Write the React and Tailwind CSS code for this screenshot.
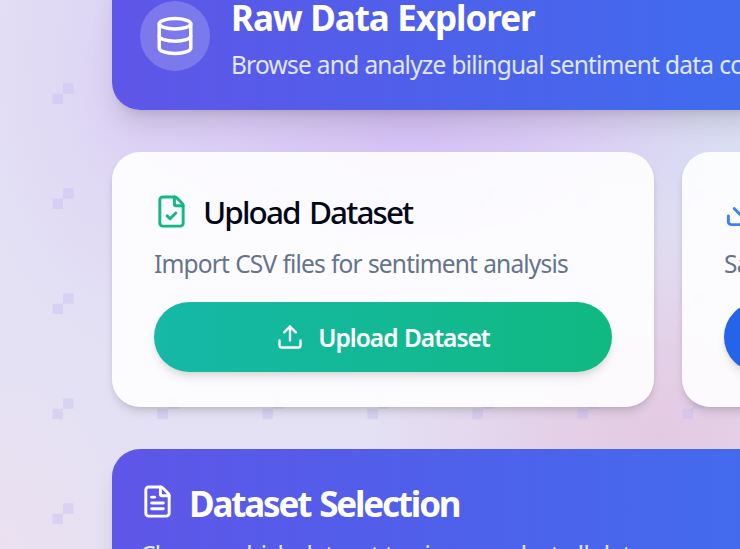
import { Database, FileCheck, FileText, Upload, Download } from "lucide-react";

function Backdrop() {
  return (
    <div className="absolute inset-0 bg-[#e4e1f4] bg-[radial-gradient(ellipse_340px_220px_at_410px_100px,#d3bdf4_0%,#d3bdf4b0_40%,transparent_100%),radial-gradient(ellipse_290px_230px_at_660px_435px,#e3cae3_0%,#e3cae3b0_40%,transparent_100%),radial-gradient(ellipse_220px_260px_at_770px_130px,#d7dff2_0%,transparent_100%),radial-gradient(ellipse_150px_200px_at_0px_549px,#eae0f0_0%,transparent_100%),radial-gradient(ellipse_170px_300px_at_130px_60px,#dcd3f5_0%,transparent_100%)]">
      <svg className="h-full w-full" aria-hidden="true">
        <defs>
          <pattern id="tiles" width="105" height="105" patternUnits="userSpaceOnUse" y="-1">
            <path d="M52.4 94.8h10.6v10.2H52.4zM63 84.2h10.6v10.6H63z" fill="#c5bbf3" fillOpacity="0.4" />
          </pattern>
        </defs>
        <rect width="100%" height="100%" fill="url(#tiles)" />
      </svg>
    </div>
  );
}

export default function App() {
  return (
    <div className="relative h-[549px] w-full overflow-hidden font-['Noto_Sans','Open_Sans',sans-serif]">
      <Backdrop />
      <main className="relative -mt-[41px] ml-[112px] flex w-[1112px] flex-col gap-[42px]">
        <header className="flex h-[151px] items-start gap-[21px] rounded-[28px] bg-[linear-gradient(90deg,#5f56e8_0px,#535de9_230px,#406bee_628px)] px-7 pt-[42px] shadow-[0_17px_26px_-5px_rgba(0,0,0,0.12),0_7px_11px_-7px_rgba(0,0,0,0.14)]">
          <div className="flex size-[70px] shrink-0 items-center justify-center rounded-full bg-white/20">
            <Database size={42} className="text-white" />
          </div>
          <div className="whitespace-nowrap">
            <h1 className="-mt-[8px] text-[35px] leading-[49px] font-bold tracking-[-1.06px] [word-spacing:0.5px] text-white">Raw Data Explorer</h1>
            <p className="mt-[5px] text-[24.5px] leading-[35px] tracking-[-0.8px] [word-spacing:0.4px] text-indigo-100">Browse and analyze bilingual sentiment data collection</p>
          </div>
        </header>

        <section className="grid grid-cols-2 gap-7">
          <article className="h-[255px] rounded-[28px] bg-white/90 px-[42px] pt-[42px] shadow-[0_7px_11px_-2px_rgba(0,0,0,0.1),0_3px_7px_-3px_rgba(0,0,0,0.15)]">
            <div className="flex h-[35px] items-center gap-[14px]">
              <FileCheck size={35} className="shrink-0 text-[#10b981]" />
              <h2 className="text-[31.5px] leading-[35px] font-medium tracking-[-1.9px] [word-spacing:3px] whitespace-nowrap text-[#020817]">Upload Dataset</h2>
            </div>
            <p className="mt-[17px] text-[24.5px] leading-[35px] tracking-[-0.82px] [word-spacing:0.5px] whitespace-nowrap text-[#64748b]">Import CSV files for sentiment analysis</p>
            <button className="mt-[21px] flex h-[70px] w-full items-center justify-center gap-[14px] rounded-full bg-linear-to-r from-[#16b8a7] to-[#10b981] text-[24.5px] font-semibold tracking-[-1px] [word-spacing:1px] whitespace-nowrap text-white shadow-[0_7px_11px_-2px_rgba(0,0,0,0.1),0_3px_7px_-3px_rgba(0,0,0,0.12)]">
              <Upload size={28} />
              <span className="mt-[2px]">Upload Dataset</span>
            </button>
          </article>
          <article className="h-[255px] rounded-[28px] bg-white/90 px-[42px] pt-[42px] shadow-[0_7px_11px_-2px_rgba(0,0,0,0.1),0_3px_7px_-3px_rgba(0,0,0,0.15)]">
            <div className="flex h-[35px] items-center gap-[14px]">
              <Download size={35} className="shrink-0 text-[#3b82f6]" />
              <h2 className="text-[31.5px] leading-[35px] font-medium tracking-[-1.7px] whitespace-nowrap text-[#020817]">Save Dataset</h2>
            </div>
            <p className="mt-[17px] text-[24.5px] leading-[35px] tracking-[-0.76px] whitespace-nowrap text-[#64748b]">Save current data</p>
            <button className="mt-[21px] flex h-[70px] w-full items-center justify-center gap-[14px] rounded-full bg-[#2563eb] text-[24.5px] font-semibold text-white shadow-[0_7px_11px_-2px_rgba(0,0,0,0.1),0_3px_7px_-3px_rgba(0,0,0,0.12)]">
              <Download size={28} />
              <span>Save Dataset</span>
            </button>
          </article>
        </section>

        <section className="h-[200px] rounded-[28px] bg-[linear-gradient(90deg,#5f56e8_0px,#535de9_230px,#436aed_628px)] px-7 pt-[35px] shadow-[0_17px_26px_-5px_rgba(0,0,0,0.12),0_7px_11px_-7px_rgba(0,0,0,0.14)]">
          <div className="flex h-[35px] items-center gap-[14px]">
            <FileText size={35} className="shrink-0 text-white" />
            <h2 className="mt-[4px] text-[35px] leading-[35px] font-bold tracking-[-2.17px] [word-spacing:2px] whitespace-nowrap text-white">Dataset Selection</h2>
          </div>
          <p className="mt-[18px] text-[24.5px] leading-[35px] tracking-[-0.65px] whitespace-nowrap text-indigo-100">Choose which dataset to view or select all data</p>
        </section>
      </main>
    </div>
  );
}
